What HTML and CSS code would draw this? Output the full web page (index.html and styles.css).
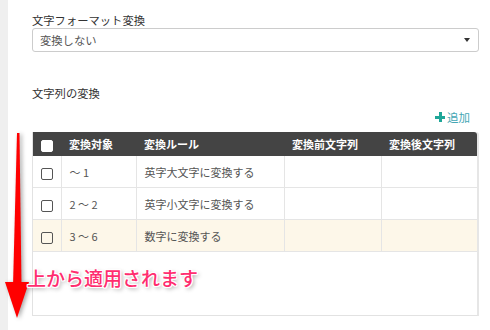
FILE: index.html
```html
<!DOCTYPE html>
<html>
<head>
    <title>文字列の変換</title>
    <meta charset="UTF-8">
    <link rel="stylesheet" href="styles.css">
</head>

<body>

<div class="page">
    <div class="side"></div>

    <div class="content">
        <label class="label">文字フォーマット変換</label>
        <div class="select">
            <span>変換しない</span>
            <span class="caret"></span>
        </div>

        <div class="section-title">文字列の変換</div>

        <div class="toolbar">
            <a class="add"><span class="plus"></span>追加</a>
        </div>

        <div class="grid">
            <table>
                <colgroup>
                    <col class="c-check">
                    <col class="c-target">
                    <col class="c-rule">
                    <col class="c-before">
                    <col class="c-after">
                </colgroup>
                <thead>
                    <tr>
                        <th class="check"><span class="box box-head"></span></th>
                        <th>変換対象</th>
                        <th>変換ルール</th>
                        <th>変換前文字列</th>
                        <th>変換後文字列</th>
                    </tr>
                </thead>
                <tbody>
                    <tr>
                        <td class="check"><span class="box"></span></td>
                        <td>〜 1</td>
                        <td>英字大文字に変換する</td>
                        <td></td>
                        <td></td>
                    </tr>
                    <tr>
                        <td class="check"><span class="box"></span></td>
                        <td>2 〜 2</td>
                        <td>英字小文字に変換する</td>
                        <td></td>
                        <td></td>
                    </tr>
                    <tr class="selected">
                        <td class="check"><span class="box"></span></td>
                        <td>3 〜 6</td>
                        <td>数字に変換する</td>
                        <td></td>
                        <td></td>
                    </tr>
                </tbody>
            </table>
        </div>
    </div>
</div>

<!-- 注釈（矢印と説明文） -->
<svg class="arrow" width="34" height="200" viewBox="0 0 34 200">
    <polygon points="17,3 19.5,3 21.5,156 13,156" fill="#ff0000"/>
    <polygon points="5,152 29,152 17,188" fill="#ff0000"/>
</svg>
<div class="note">上から適用されます</div>

</body>
</html>
```

FILE: styles.css
```css
body {
    margin: 0;
    background: #fff;
    font-family: "Noto Sans CJK JP", sans-serif;
    font-size: 11px;
    color: #333;
}

.page {
    display: flex;
    min-height: 330px;
}

.side {
    width: 8px;
    background-color: #efefef;
}

.content {
    flex: 1;
    padding: 12px 11px 0 24px;
}

.label {
    display: block;
    font-size: 11.3px;
    line-height: 16px;
}

.select {
    display: flex;
    align-items: center;
    justify-content: space-between;
    height: 24px;
    box-sizing: border-box;
    padding: 0 8px 0 7px;
    border: 1px solid #ccc;
    border-radius: 3px;
    font-size: 11.3px;
    color: #555;
}

.caret {
    width: 0;
    height: 0;
    border-top: 4px solid #333;
    border-left: 3px solid transparent;
    border-right: 3px solid transparent;
}

.section-title {
    margin-top: 33px;
    font-size: 11.3px;
    line-height: 16px;
}

.toolbar {
    display: flex;
    justify-content: flex-end;
    margin-top: 8px;
    padding-right: 9px;
    line-height: 16px;
}

.add {
    display: flex;
    align-items: center;
    gap: 2px;
    color: #45a7b5;
    font-size: 11.5px;
    cursor: pointer;
}

.plus {
    position: relative;
    width: 10px;
    height: 10px;
}

.plus::before,
.plus::after {
    content: "";
    position: absolute;
    background: #1fa698;
}

.plus::before {
    left: 0;
    top: 4px;
    width: 10px;
    height: 2.5px;
}

.plus::after {
    left: 4px;
    top: 0;
    width: 2.5px;
    height: 10px;
}

/* 一覧 */
.grid {
    margin-top: 7px;
    height: 184px;
    box-sizing: border-box;
    border-left: 1px solid #e2e2e2;
    border-right: 2px solid #e6e6e6;
    border-bottom: 1px solid #e2e2e2;
    border-top-right-radius: 3px;
}

table {
    width: 100%;
    border-collapse: collapse;
    table-layout: fixed;
}

.c-check { width: 28px; }
.c-target { width: 75px; }
.c-rule { width: 148px; }
.c-before { width: 97px; }

th {
    height: 24px;
    padding: 0 0 0 8px;
    background-color: #444;
    color: #fff;
    font-weight: bold;
    text-align: left;
}

th:last-child {
    border-top-right-radius: 3px;
}

td {
    height: 31px;
    padding: 0 0 0 8px;
    border-bottom: 1px solid #e5e5e5;
    border-left: 1px solid #e5e5e5;
    color: #555;
}

td:first-child {
    border-left: none;
}

th.check,
td.check {
    padding: 0;
    text-align: center;
}

.box {
    display: inline-block;
    width: 10px;
    height: 10px;
    border: 1px solid #555;
    border-radius: 2px;
    vertical-align: middle;
}

.box-head {
    background: #fff;
    border-color: #fff;
}

tr.selected td {
    background-color: #fdf7e9;
}

/* 注釈 */
.arrow {
    position: absolute;
    left: 0;
    top: 130px;
    filter: drop-shadow(2px 1px 2px rgba(0, 0, 0, 0.35));
}

.note {
    position: absolute;
    left: 27px;
    top: 265px;
    font-size: 19px;
    font-weight: 500;
    line-height: 26px;
    color: #ff2d6f;
    text-shadow:
        1px 0 0 #fff, -1px 0 0 #fff, 0 1px 0 #fff, 0 -1px 0 #fff,
        1px 1px 0 #fff, -1px -1px 0 #fff, 1px -1px 0 #fff, -1px 1px 0 #fff,
        2px 2px 4px rgba(0, 0, 0, 0.4);
}
```
